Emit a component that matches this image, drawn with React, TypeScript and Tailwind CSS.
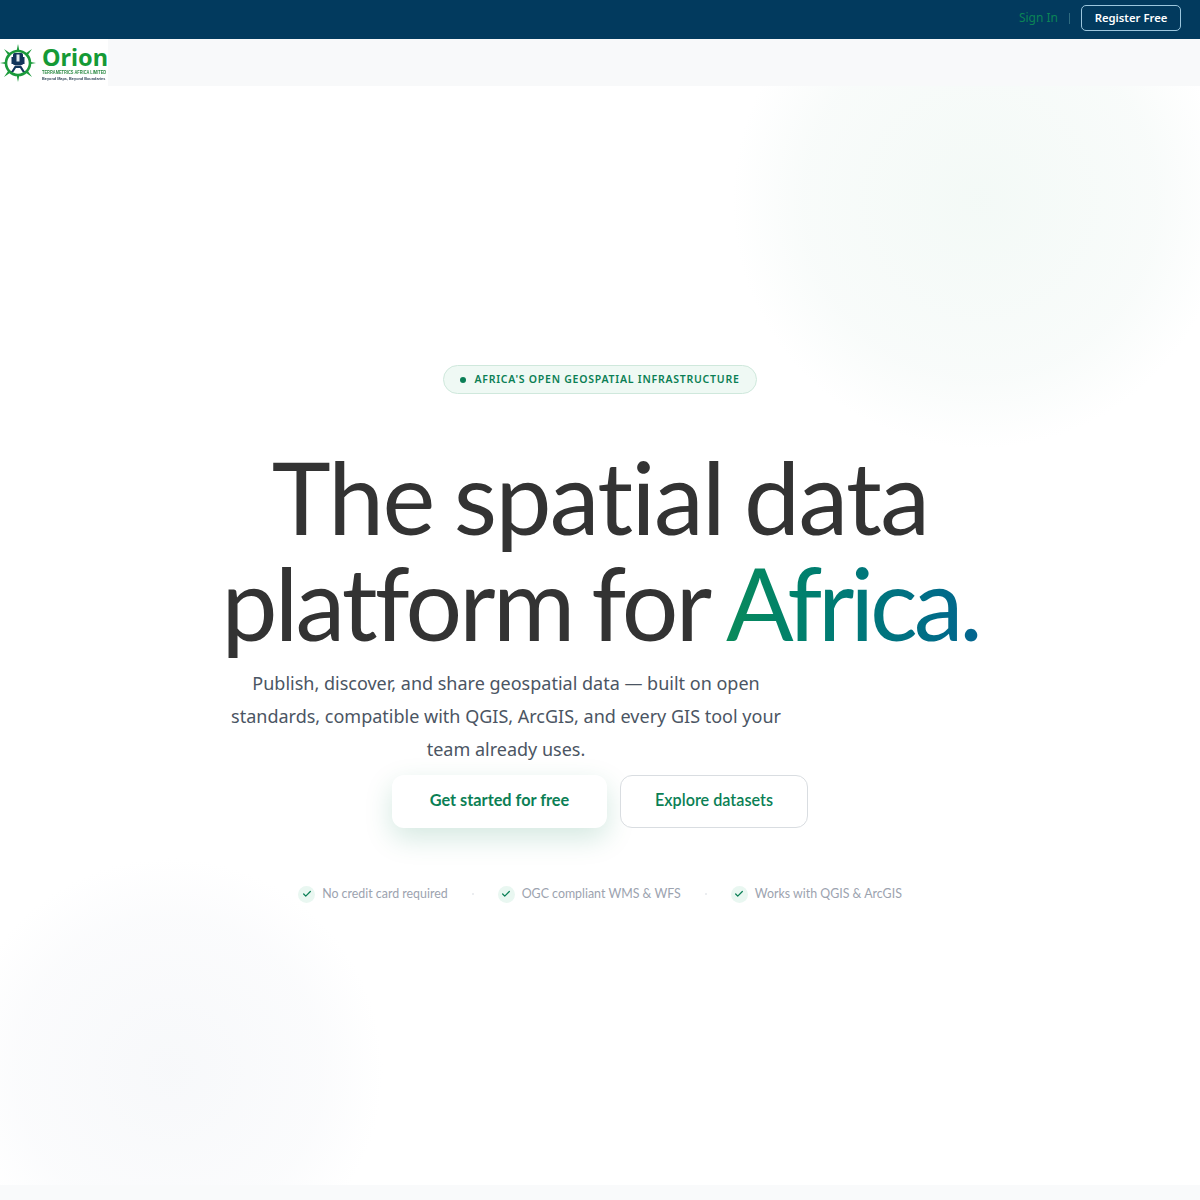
import { Check } from 'lucide-react';

const PERKS = ['No credit card required', 'OGC compliant WMS & WFS', 'Works with QGIS & ArcGIS'];

function Logo() {
  return (
    <div className="flex h-[47px] w-[108px] items-center overflow-hidden bg-white">
      <svg width="36" height="38" viewBox="0 0 36 38" className="flex-shrink-0">
        <g fill="#1a9a3a">
          <path d="M18 0l1.6 8h-3.2zM18 38l1.6-8h-3.2zM0 19l8-1.6v3.2zM36 19l-8-1.6v3.2z" />
          <path d="M4 5l8 5.5-2.5 2.5zM32 5l-8 5.5 2.5 2.5zM4 33l8-5.5-2.5-2.5zM32 33l-8-5.5 2.5-2.5z" />
        </g>
        <circle cx="18" cy="19" r="12" fill="white" stroke="#1a9a3a" strokeWidth="2.6" />
        <rect x="13" y="9" width="10" height="12" rx="1.5" fill="#12355b" />
        <rect x="16.5" y="10.5" width="3" height="7" fill="#e3ebf0" />
        <path d="M11.5 13h1.5v7h-1.5zM23 13h1.5v7H23z" fill="#12355b" />
        <path d="M11 28l4-6.500h6l4 6.500h-2.400l-2.600-4h-4l-2.600 4z" fill="#12355b" />
      </svg>
      <div className="ml-[6px] flex flex-col pt-[1px]">
        <span className="text-[23.5px] font-bold leading-[22px] text-[#159a36] [font-family:'Noto_Sans',sans-serif]">Orion</span>
        <span className="mt-[1px] origin-left scale-x-[0.72] whitespace-nowrap text-[5.5px] font-bold leading-[6px] text-[#2c8a44] [font-family:'Liberation_Sans',sans-serif]">TERRAMETRICS AFRICA LIMITED</span>
        <span className="mt-[1px] origin-left scale-x-[0.96] whitespace-nowrap text-[4px] font-bold leading-[5px] text-[#33475b] [font-family:'Liberation_Sans',sans-serif]">Beyond Maps, Beyond Boundaries</span>
      </div>
    </div>
  );
}

export default function App() {
  return (
    <div className="flex min-h-[1200px] flex-col bg-white [font-family:'Noto_Sans',sans-serif]">
      {/* Top bar */}
      <div className="flex h-[39px] flex-shrink-0 items-center justify-end bg-[#023a5e] pr-[19px] pb-[3px] shadow-[0_1px_3px_rgba(0,0,0,0.15)]">
        <span className="text-xs text-[#0b8456]">Sign In</span>
        <span className="ml-[11px] mr-[11px] h-[11px] w-px bg-[#2f6b80]" />
        <button className="h-[26px] w-[100px] rounded-[5px] border border-[#9cc6dd] text-[11.3px] font-semibold text-white">
          Register Free
        </button>
      </div>

      {/* Logo bar */}
      <div className="flex h-[47px] flex-shrink-0 bg-[#f8f9fa]">
        <Logo />
      </div>

      {/* Hero */}
      <main className="relative flex h-[1099px] flex-shrink-0 flex-col items-center overflow-hidden pt-[279px]">
        <div className="absolute left-[730px] top-[-135px] h-[500px] w-[500px] rounded-full bg-[radial-gradient(circle,rgba(236,246,241,0.6)_0%,rgba(244,249,247,0.6)_50%,rgba(255,255,255,0)_70%)]" />
        <div className="absolute left-[-45px] top-[770px] h-[430px] w-[430px] rounded-full bg-[radial-gradient(circle,rgba(243,245,248,0.65)_0%,rgba(248,249,251,0.6)_50%,rgba(255,255,255,0)_70%)]" />

        <div className="relative flex h-[29px] w-[314px] items-center justify-center gap-2 rounded-full border border-[#cfe8dc] bg-[#eff9f4]">
          <span className="h-[6px] w-[6px] rounded-full bg-[#0a7f56]" />
          <span className="text-[10.5px] font-semibold tracking-[0.76px] text-[#0b7f55]">AFRICA'S OPEN GEOSPATIAL INFRASTRUCTURE</span>
        </div>

        <h1 className="relative mt-[49px] text-center text-[100px] font-normal leading-[106px] text-[#333333] [font-family:Lato,sans-serif]">
          <span className="tracking-[-1.6px] [word-spacing:-4px]">The spatial data</span>
          <br />
          <span className="tracking-[-2.8px] [word-spacing:-4px]">platform for </span>
          <span className="bg-gradient-to-r from-[#0a8a5a] to-[#04658f] bg-clip-text tracking-[-4.2px] text-transparent">Africa.</span>
        </h1>

        <p className="relative mr-[188px] mt-[12px] w-[560px] text-center text-[18px] leading-[33px] text-[#4b5563]">
          Publish, discover, and share geospatial data — built on open standards, compatible with QGIS, ArcGIS, and every GIS tool your team already uses.
        </p>

        <div className="relative mt-[9px] flex gap-[13px]">
          <button className="h-[53px] w-[215px] rounded-xl bg-white pb-[2px] text-[16.3px] font-bold text-[#0b7f55] shadow-[0_10px_28px_rgba(10,127,85,0.18)] [font-family:Lato,sans-serif]">
            Get started for free
          </button>
          <button className="h-[53px] w-[188px] rounded-xl border border-[#d9dde1] bg-white pb-[2px] text-[16.2px] font-semibold text-[#0b7f55] [font-family:Lato,sans-serif]">
            Explore datasets
          </button>
        </div>

        <div className="relative mt-[57px] flex items-center text-[12.4px] text-[#9ca3af] [font-family:Lato,sans-serif]">
          {PERKS.map((perk, i) => (
            <div key={perk} className="flex items-center">
              {i > 0 && <span className="mx-[24px] h-[2px] w-[2px] rounded-full bg-[#e5e7eb]" />}
              <span className="flex h-[17px] w-[17px] items-center justify-center rounded-full bg-[#e9f7f1]">
                <Check className="h-[10px] w-[10px] text-[#0a7f56]" strokeWidth={3} />
              </span>
              <span className="ml-[7px] whitespace-nowrap">{perk}</span>
            </div>
          ))}
        </div>
      </main>

      {/* Footer strip */}
      <div className="h-[15px] flex-shrink-0 bg-[#f9fafb]" />
    </div>
  );
}
